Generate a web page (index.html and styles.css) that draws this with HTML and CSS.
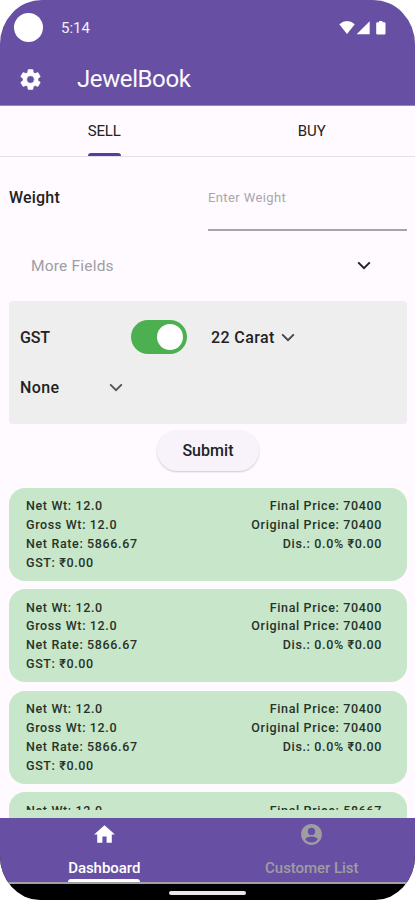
FILE: index.html
```html
<!DOCTYPE html>
<html lang="en">
<head>
<meta charset="utf-8">
<title>JewelBook</title>
<link rel="stylesheet" href="styles.css">
</head>
<body>
<div class="phone">
  <header class="top">
    <div class="status">
      <span class="camera"></span>
      <span class="clock">5:14</span>
      <svg class="signals" width="48" height="16" viewBox="0 0 48 16" fill="#fff">
        <path d="M0.3 4.2Q8 -2.4 15.8 4.2L8 14Z"/>
        <path d="M30.7 1.2V14.300H17.6Z"/>
        <path d="M40 1h3.5v1.3h1.7q1.3 0 1.3 1.3v9.6q0 1.3-1.3 1.3h-6.700q-1.300 0-1.300-1.300v-9.600q0-1.300 1.300-1.300h1.500z"/>
      </svg>
    </div>
    <div class="appbar">
      <svg class="gear" width="25" height="25" viewBox="0 0 24 24" fill="#fff" stroke="#fff" stroke-width=".5"><path d="M19.14 12.94c.04-.3.06-.61.06-.94 0-.32-.02-.64-.07-.94l2.030-1.580c.18-.14.23-.41.12-.61l-1.920-3.320c-.12-.22-.37-.29-.59-.22l-2.390.96c-.5-.38-1.030-.7-1.620-.94l-.36-2.540c-.04-.24-.24-.41-.48-.41h-3.840c-.24 0-.43.17-.47.41l-.36 2.540c-.59.24-1.130.57-1.620.94l-2.390-.96c-.22-.08-.47 0-.59.22L2.740 8.870c-.12.21-.08.47.12.61l2.030 1.580c-.05.3-.09.63-.09.94s.02.64.07.94l-2.030 1.580c-.18.14-.23.41-.12.61l1.920 3.320c.12.22.37.29.59.22l2.390-.96c.5.38 1.030.7 1.620.94l.36 2.540c.05.24.24.41.48.41h3.840c.24 0 .44-.17.47-.41l.36-2.540c.59-.24 1.130-.56 1.620-.94l2.390.96c.22.08.47 0 .59-.22l1.920-3.320c.12-.22.07-.47-.12-.61zM12 15.600A3.600 3.600 0 1 1 12 8.400a3.600 3.600 0 0 1 0 7.200z"/></svg>
      <h1 class="title">JewelBook</h1>
    </div>
  </header>

  <nav class="tabs">
    <div class="tab"><span class="tab-label active">SELL</span></div>
    <div class="tab"><span class="tab-label">BUY</span></div>
  </nav>

  <main class="content">
    <div class="weight-row">
      <span class="weight-label">Weight</span>
      <div class="weight-input"><span class="hint">Enter Weight</span></div>
    </div>
    <div class="more">
      <span class="more-label">More Fields</span>
      <svg width="14" height="9" viewBox="0 0 14 9" fill="none" stroke="#222" stroke-width="2"><path d="M1.200 1.400L7 7.200l5.800-5.800"/></svg>
    </div>
    <section class="panel">
      <div class="panel-row">
        <span class="gst">GST</span>
        <span class="switch"><span class="knob"></span></span>
        <span class="carat">22 Carat</span>
        <svg width="14" height="9" viewBox="0 0 14 9" fill="none" stroke="#444" stroke-width="1.900"><path d="M1.200 1.400L7 7.200l5.800-5.800"/></svg>
      </div>
      <div class="panel-row">
        <span class="none">None</span>
        <svg width="14" height="9" viewBox="0 0 14 9" fill="none" stroke="#555" stroke-width="1.900"><path d="M1.200 1.400L7 7.200l5.800-5.800"/></svg>
      </div>
    </section>
    <div class="submit"><span>Submit</span></div>

    <div class="cards">
      <article class="card">
        <div class="left"><p>Net Wt: 12.0</p><p>Gross Wt: 12.0</p><p>Net Rate: 5866.67</p><p>GST: ₹0.00</p></div>
        <div class="right"><p>Final Price: 70400</p><p>Original Price: 70400</p><p>Dis.: 0.0% ₹0.00</p></div>
      </article>
      <article class="card">
        <div class="left"><p>Net Wt: 12.0</p><p>Gross Wt: 12.0</p><p>Net Rate: 5866.67</p><p>GST: ₹0.00</p></div>
        <div class="right"><p>Final Price: 70400</p><p>Original Price: 70400</p><p>Dis.: 0.0% ₹0.00</p></div>
      </article>
      <article class="card">
        <div class="left"><p>Net Wt: 12.0</p><p>Gross Wt: 12.0</p><p>Net Rate: 5866.67</p><p>GST: ₹0.00</p></div>
        <div class="right"><p>Final Price: 70400</p><p>Original Price: 70400</p><p>Dis.: 0.0% ₹0.00</p></div>
      </article>
      <article class="card partial">
        <div class="left"><p>Net Wt: 12.0</p></div>
        <div class="right"><p>Final Price: 58667</p></div>
      </article>
    </div>
  </main>

  <footer class="bottom">
    <div class="nav">
      <div class="nav-item selected">
        <svg width="25" height="25" viewBox="0 0 24 24" fill="#fff"><path d="M10 20v-6h4v6h5v-8h3L12 3 2 12h3v8z"/></svg>
        <span class="dash">Dashboard</span>
      </div>
      <div class="nav-item">
        <svg width="25" height="25" viewBox="0 0 24 24" fill="#9e9e9e"><path d="M12 2C6.480 2 2 6.480 2 12s4.480 10 10 10 10-4.480 10-10S17.520 2 12 2zm0 3.500a3.500 3.500 0 1 1 0 7 3.500 3.500 0 0 1 0-7zm0 14.200c-2.500 0-4.710-1.280-6-3.220.03-1.500 4-2.680 6-2.680s5.970 1.180 6 2.680A7.200 7.200 0 0 1 12 19.700z"/></svg>
        <span class="cust">Customer List</span>
      </div>
    </div>
    <div class="gesture"><span class="pill"></span></div>
  </footer>
</div>
</body>
</html>
```
FILE: styles.css
```css
* { box-sizing: border-box; margin: 0; padding: 0; }
body { background: #fff; font-family: Roboto, "Liberation Sans", sans-serif; color: #222; }
svg { display: block; flex: none; }
span { white-space: nowrap; }

.phone {
  width: 415px; height: 900px; overflow: hidden;
  display: flex; flex-direction: column;
  background: #fefaff;
  border-radius: 42px 42px 40px 40px / 44px 44px 44px 44px;
}

.top { flex: none; height: 106px; background: #6750a4; border-bottom: 1px solid #9283c2; color: #fff; }
.status { height: 54px; display: flex; align-items: center; padding-left: 14px; }
.camera { width: 29px; height: 29px; border-radius: 50%; background: #fff; }
.clock { margin-left: 18px; font-size: 15px; letter-spacing: 0; color: #f3effa; padding-top: 2px; }
.signals { margin-left: auto; margin-right: 28px; margin-top: 2px; }
.appbar { height: 51px; display: flex; align-items: center; padding-left: 18px; }
.gear { margin-top: -1px; }
.title { margin-left: 34px; margin-top: -2px; font-size: 24px; font-weight: 400; letter-spacing: -.4px; color: #fbf8ff; }

.tabs { flex: none; height: 51px; display: flex; border-bottom: 1px solid #e4e0e8; }
.tab { flex: 1; display: flex; justify-content: center; padding-left: 1px; }
.tab-label { height: 50px; line-height: 50px; font-size: 15px; letter-spacing: -.1px; }
.tab-label.active { position: relative; }
.tab-label.active::after { content: ""; position: absolute; left: 0; right: 0; bottom: 0; height: 3px; border-radius: 3px 3px 0 0; background: #5b3a9e; }

.content { flex: none; height: 661px; overflow: hidden; padding: 0 8px 0 9px; }
.weight-row { height: 74px; display: flex; }
.weight-label { width: 199px; padding-top: 31px; font-size: 16px; font-weight: 500; line-height: 20px; letter-spacing: .2px; }
.weight-input { flex: 1; padding-top: 31px; line-height: 20px; border-bottom: 2px solid #a6a3a9; }
.hint { display: block; font-size: 13px; letter-spacing: .4px; color: #a9a6ac; }
.more { height: 70px; display: flex; align-items: center; justify-content: space-between; padding: 0 36px 1px 22px; }
.more-label { font-size: 15.500px; letter-spacing: .2px; color: #a09da3; }

.panel { height: 123px; border-radius: 4px; background: #eee; padding: 11px; }
.panel-row { height: 50px; display: flex; align-items: center; font-size: 16px; font-weight: 500; letter-spacing: .4px; }
.gst { width: 111px; letter-spacing: -.2px; }
.switch { width: 56px; height: 34px; border-radius: 17px; background: #4caf50; padding: 4px; display: flex; justify-content: flex-end; }
.knob { width: 26px; height: 26px; border-radius: 50%; background: #fff; }
.carat { margin-left: 24px; width: 70px; }
.none { width: 89px; }

.submit { width: 102px; height: 41px; margin: 6px auto 16.500px; border-radius: 21px; background: #f8f3fb; display: flex; align-items: center; justify-content: center; font-size: 16px; font-weight: 500; letter-spacing: .05px; box-shadow: 0 1px 2px rgba(0,0,0,.2); }

.cards { display: flex; flex-direction: column; gap: 8.500px; }
.card { flex: none; height: 93px; border-radius: 16px; background: #c8e6c9; padding: 9.500px 25px 0 17px; display: flex; justify-content: space-between; font-size: 12.500px; font-weight: 500; line-height: 18.900px; letter-spacing: .64px; color: #263328; }
.right { text-align: right; }
.partial .left, .partial .right { height: 8px; overflow: hidden; }

.bottom { flex: none; height: 82px; background: #000; }
.nav { height: 66px; display: flex; background: #6750a4; border-bottom: 2px solid #a3a0a7; }
.nav-item { flex: 1; display: flex; flex-direction: column; align-items: center; padding: 4px 0 0 1px; color: #9e9e9e; font-size: 15px; font-weight: 500; }
.nav-item span { height: 35px; line-height: 42px; letter-spacing: -.05px; }
.selected { color: #fff; }
.nav-item .dash { position: relative; }
.dash::after { content: ""; position: absolute; left: 0; right: 0; bottom: 0; height: 3px; border-radius: 3px 3px 0 0; background: #fff; }
.gesture { height: 16px; display: flex; justify-content: center; padding-top: 7px; }
.pill { width: 77px; height: 4px; border-radius: 2px; background: #e8e8e8; }
```
